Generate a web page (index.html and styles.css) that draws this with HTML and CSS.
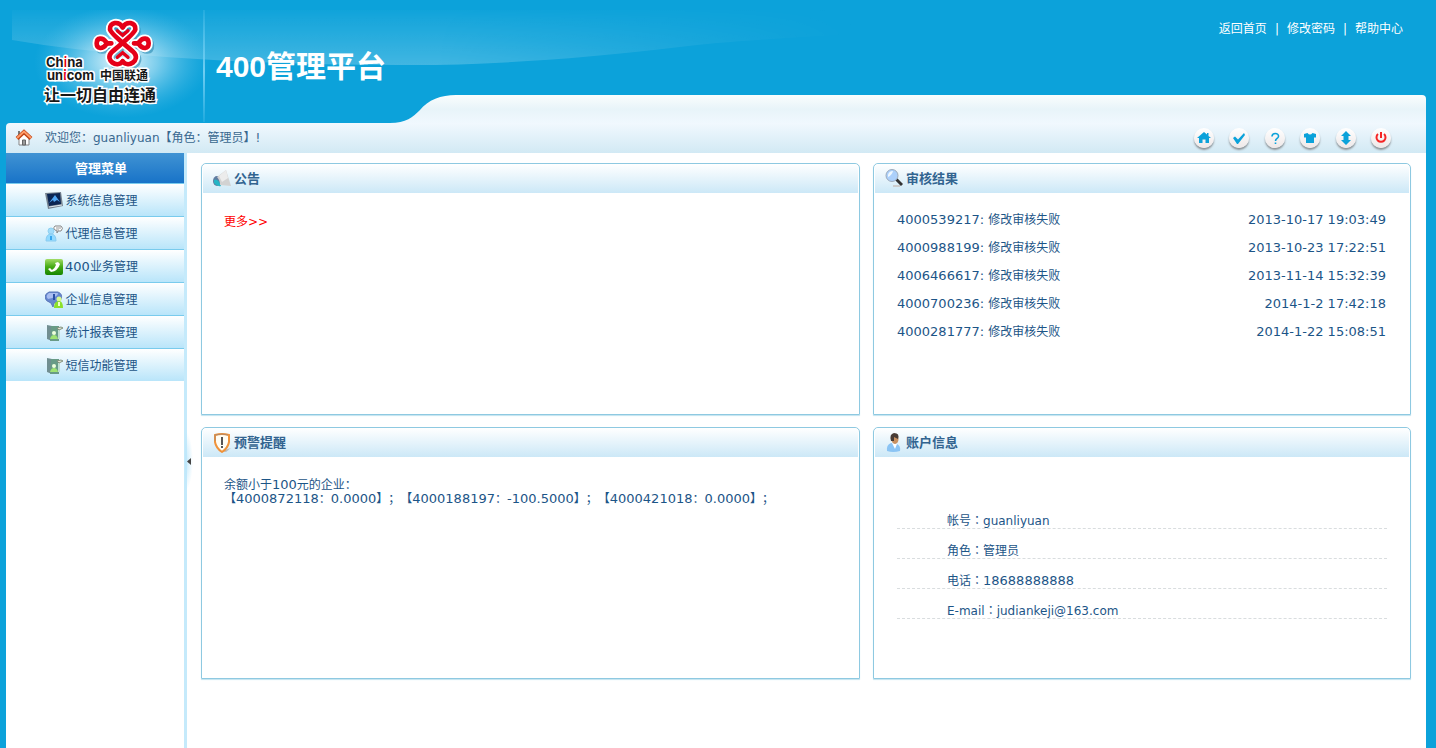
FILE: index.html
```html
<!DOCTYPE html>
<html lang="zh-CN">
<head>
<meta charset="utf-8">
<title>400管理平台</title>
<link rel="stylesheet" href="styles.css">
</head>
<body>
<header class="header">
  <svg class="shine" width="1100" height="113" viewBox="12 10 1100 113" aria-hidden="true">
    <defs>
      <linearGradient id="shineY" x1="0" y1="0" x2="0" y2="1"><stop offset="0" stop-color="#fff" stop-opacity=".02"/><stop offset="1" stop-color="#fff" stop-opacity=".22"/></linearGradient>
      <linearGradient id="shineX" x1="0" y1="0" x2="1" y2="0"><stop offset="0" stop-color="#fff"/><stop offset=".5" stop-color="#fff"/><stop offset="1" stop-color="#000"/></linearGradient>
      <mask id="shineMask"><rect x="12" y="0" width="850" height="123" fill="url(#shineX)"/></mask>
      <radialGradient id="glow"><stop offset="0" stop-color="#fff" stop-opacity=".95"/><stop offset=".4" stop-color="#c8ebf9" stop-opacity=".6"/><stop offset="1" stop-color="#58c0e8" stop-opacity="0"/></radialGradient>
      <linearGradient id="rule" x1="0" y1="0" x2="0" y2="1"><stop offset="0" stop-color="#6fcdf2" stop-opacity=".2"/><stop offset=".55" stop-color="#6fcdf2"/><stop offset="1" stop-color="#6fcdf2" stop-opacity=".2"/></linearGradient>
    </defs>
    <path d="M12 10H860V34Q740 40 680 47Q520 66 400 65Q260 65 140 55Q70 50 12 40Z" fill="url(#shineY)" mask="url(#shineMask)"/>
    <ellipse cx="122" cy="62" rx="88" ry="56" fill="url(#glow)"/>
    <rect x="203" y="10" width="2" height="112" fill="url(#rule)"/>
  </svg>
  <svg class="logo" width="180" height="113" viewBox="12 10 180 113" role="img" aria-label="China unicom 中国联通">
    <defs>
      <g id="knot" fill="none" stroke-linecap="round" stroke-linejoin="round">
        <path d="M368 82C356 62 328 66 330 88C331 102 386 142 402 158C422 180 385 206 368 184"/>
        <path d="M368 82C380 62 408 66 406 88C405 102 350 142 334 158C314 180 351 206 368 184"/>
        <path d="M290 130C290 112 308 112 318 126L322 130L318 134C308 148 290 148 290 130ZM446 130C446 112 428 112 418 126L414 130L418 134C428 148 446 148 446 130Z"/>
        <path d="M322 130H334M402 130H414"/>
      </g>
    </defs>
    <g transform="scale(.333333)">
      <use href="#knot" stroke="#1479a5" stroke-opacity=".5" stroke-width="21" x="6" y="7"/>
      <use href="#knot" stroke="#fff" stroke-width="25"/>
      <use href="#knot" stroke="#e50019" stroke-width="14"/>
      <path d="M352 92L368 106L384 92M352 172L368 158L384 172" fill="none" stroke="#e50019" stroke-width="10" stroke-linecap="round"/>
    </g>
    <g class="logo-text">
      <text x="46" y="67" font-size="13">Ch<tspan fill="#e50019">i</tspan>na</text>
      <text x="47" y="80" font-size="13">un<tspan fill="#e50019">i</tspan>com</text>
      <text x="100" y="80" font-size="12">中国联通</text>
      <text class="slogan" x="44" y="101" font-size="16">让一切自由连通</text>
    </g>
  </svg>
  <h1 class="title">400管理平台</h1>
  <nav class="top-links" aria-label="快捷链接"><a href="#">返回首页</a><span>|</span><a href="#">修改密码</a><span>|</span><a href="#">帮助中心</a></nav>
  <div class="tab">
    <svg width="66" height="28" viewBox="0 0 66 28" aria-hidden="true"><defs><linearGradient id="tabFill" x1="0" y1="0" x2="0" y2="1"><stop offset="0" stop-color="#fafdfd"/><stop offset=".5" stop-color="#e8f4f9"/><stop offset="1" stop-color="#f0f8fe"/></linearGradient></defs><path d="M0 28C16 28 23 22 30 15C38 5 51 0 66 0V28Z" fill="url(#tabFill)"/></svg>
    <div class="tab-fill"></div>
  </div>
</header>

<div class="welcome">
  <svg width="18" height="18" viewBox="0 0 18 18" aria-hidden="true"><path d="M4 8V16H14V8L9 4Z" fill="#fff" stroke="#858585"/><path d="M3 2H5V6H3Z" fill="#777"/><path d="M7.500 16V11H10.500V16Z" fill="#9a9a9a" stroke="#666"/><path d="M2 9.500L9 3L16 9.500" fill="none" stroke="#c04316" stroke-width="4"/><path d="M2 9L9 2.500L16 9" fill="none" stroke="#ff9b68" stroke-width="2"/></svg>
  <p>欢迎您：guanliyuan【角色：管理员】!</p>
  <div class="actions">
    <button aria-label="首页"><svg viewBox="0 0 20 20"><path d="M10 4L3 10H5V15H8.500V11.500H11.500V15H15V10H17L14.500 8V5H13V6.500Z"/></svg></button>
    <button aria-label="确认"><svg viewBox="0 0 20 20"><path d="M4 10L6 8.500L9 11.500L15 5L16 7L9 16H8Z"/></svg></button>
    <button aria-label="帮助"><svg viewBox="0 0 20 20"><path d="M7 8.500C7 4.500 14 4.500 13.500 8.500C13.300 10.500 10.500 10.500 10.500 13M10.500 14.500V16" fill="none" stroke="#0ca2da" stroke-width="1.600"/></svg></button>
    <button aria-label="换肤"><svg viewBox="0 0 20 20"><path d="M7.500 5Q10 8 12.500 5L16 6V9.500H14V15H6V9.500H4V6Z"/></svg></button>
    <button aria-label="展开"><svg viewBox="0 0 20 20"><path d="M10 3L15 8H12.500V12H15L10 17L5 12H7.500V8H5Z"/></svg></button>
    <button aria-label="退出"><svg viewBox="0 0 20 20"><path d="M7 6A4.500 4.500 0 1 0 13 6M10 4V10" fill="none" stroke="#f52525" stroke-width="2"/></svg></button>
  </div>
</div>

<div class="layout">
  <aside class="sidebar">
    <h2>管理菜单</h2>
    <nav class="menu" aria-label="管理菜单">
      <a href="#"><svg viewBox="0 0 18 18"><path d="M0 1L16 0L18 14L3 17Z" fill="#74818e"/><path d="M2 2L15 1L16 12L4 14Z" fill="#0b2553"/><path d="M4 11L10 3L15 10L12 8L9 10L8 8Z" fill="#50a7f5"/><path d="M4 15L17 13" stroke="#dfe8f0" stroke-width="1"/></svg>系统信息管理</a>
      <a href="#"><svg viewBox="0 0 18 18"><circle cx="6" cy="6" r="3" fill="#a1dcfa" stroke="#8fd0f0"/><path d="M1 16Q1 9 6 9Q11 9 11 16Z" fill="#91daff" stroke="#8accf0"/><path d="M5 11H7V15H5Z" fill="#36a6ed"/><path d="M10 1H16Q19 3 16 6H13L12 8V6Q7 4 10 1Z" fill="#fff" stroke="#858585"/><path d="M11 3H16M11 5H14" stroke="#999"/></svg>代理信息管理</a>
      <a href="#"><svg viewBox="0 0 18 18"><defs><linearGradient id="green" x2="0" y2="1"><stop stop-color="#a3dc67"/><stop offset=".5" stop-color="#42a914"/><stop offset="1" stop-color="#188500"/></linearGradient></defs><rect y="1" width="18" height="16" rx="2" fill="url(#green)"/><path d="M3 11L5 10L7 12Q10 10 11 7L10 5L13 4L15 6Q13 13 6 14Z" fill="#fff"/></svg><span><span class="num">400</span>业务管理</span></a>
      <a href="#"><svg viewBox="0 0 18 18"><path d="M4 1H13Q18 3 16 8Q15 12 9 12L8 16L6 12Q0 10 0 6Q0 3 4 1Z" fill="#6688d0" stroke="#5b78b8"/><path d="M4 2H13Q13 6 3 8Q0 5 4 2Z" fill="#a8bdf0"/><path d="M9 3V9" stroke="#294fa3" stroke-width="2"/><circle cx="14" cy="8" r="2.500" fill="#d7f98e"/><path d="M9 17Q9 10 14 10Q18 10 18 17Z" fill="#8de12c"/><path d="M14 11V15" stroke="#efffc5" stroke-width="2"/></svg>企业信息管理</a>
      <a href="#"><svg viewBox="0 0 18 18"><path d="M2 1L7 2V17L2 15Z" fill="#718e91"/><path d="M6 2H14V17H5Z" fill="#689b86"/><path d="M14 4V15" stroke="#beddd0" stroke-width="2"/><circle cx="9" cy="9" r="2" fill="#edffdc"/><path d="M5 15Q6 11 9 11Q12 11 13 15Z" fill="#9ee272"/><path d="M12 4L16 3L18 4L14 6Z" fill="#e3e9d5" stroke="#84917e"/></svg>统计报表管理</a>
      <a href="#"><svg viewBox="0 0 18 18"><path d="M2 1L7 2V17L2 15Z" fill="#718e91"/><path d="M6 2H14V17H5Z" fill="#689b86"/><path d="M14 4V15" stroke="#beddd0" stroke-width="2"/><circle cx="9" cy="9" r="2" fill="#edffdc"/><path d="M5 15Q6 11 9 11Q12 11 13 15Z" fill="#9ee272"/><path d="M12 4L16 3L18 4L14 6Z" fill="#e3e9d5" stroke="#84917e"/></svg>短信功能管理</a>
    </nav>
  </aside>
  <button class="collapse" aria-label="收起菜单"><svg width="4" height="7" viewBox="0 0 4 7"><path d="M0 3.500L4 0V7Z" fill="#444"/></svg></button>

  <main class="panels">
    <section class="panel">
      <h2><svg viewBox="0 0 20 20"><ellipse cx="6" cy="12" rx="4" ry="5" fill="#607ca1"/><path d="M3 11Q7 9 10 17Q6 18 3 14Z" fill="#25b5c5"/><path d="M6 8L15 1L20 17L9 16Q9 11 6 8Z" fill="#d2d2d2"/><path d="M8 7L15 1L17 9L11 13Z" fill="#ececec"/></svg>公告</h2>
      <p class="more"><a href="#">更多<span>&gt;&gt;</span></a></p>
    </section>
    <section class="panel">
      <h2><svg viewBox="0 0 20 20"><path d="M10 17H17" stroke="#ccc" stroke-width="2"/><path d="M13 10L19 16" stroke="#333" stroke-width="3"/><circle cx="9" cy="6.500" r="6" fill="#acd0fb" stroke="#9daaba"/><path d="M5 6Q6 2 10 2Q9 6 5 8Z" fill="#eff8ff"/></svg>审核结果</h2>
      <ul class="results">
        <li><span><span class="num">4000539217: </span>修改审核失败</span><time class="num">2013-10-17 19:03:49</time></li>
        <li><span><span class="num">4000988199: </span>修改审核失败</span><time class="num">2013-10-23 17:22:51</time></li>
        <li><span><span class="num">4006466617: </span>修改审核失败</span><time class="num">2013-11-14 15:32:39</time></li>
        <li><span><span class="num">4000700236: </span>修改审核失败</span><time class="num">2014-1-2 17:42:18</time></li>
        <li><span><span class="num">4000281777: </span>修改审核失败</span><time class="num">2014-1-22 15:08:51</time></li>
      </ul>
    </section>
    <section class="panel">
      <h2><svg viewBox="0 0 20 20"><path d="M10 18L20 15L15 19Z" fill="#bbb"/><path d="M4 2Q11 0 18 2V9Q17 15 11 19Q5 15 4 9Z" fill="#fffdf4" stroke="#f0933a" stroke-width="2"/><path d="M4 2Q11 0 17 2M4 2V8" fill="none" stroke="#b58a68"/><path d="M11 4V12M11 13V15" stroke="#555" stroke-width="2"/></svg>预警提醒</h2>
      <p class="warning">余额小于<span class="num">100</span>元的企业：<br>【<span class="num">4000872118</span>：<span class="num">0.0000</span>】；【<span class="num">4000188197</span>：<span class="num">-100.5000</span>】；【<span class="num">4000421018</span>：<span class="num">0.0000</span>】；</p>
    </section>
    <section class="panel">
      <h2><svg viewBox="0 0 20 20"><path d="M4 18Q3 12 8 10L14 11Q18 13 17 18Q10 20 4 18Z" fill="#8bc4f4"/><path d="M9 10L12 16L14 11Z" fill="#fff"/><ellipse cx="12" cy="6" rx="3.500" ry="5" fill="#c99161"/><path d="M8 8Q6 1 11 0Q17 0 15 6L11 4V8Z" fill="#493c35"/></svg>账户信息</h2>
      <dl class="account">
        <div><dt>帐号<span class="colon" lang="zh-TW">：</span></dt><dd>guanliyuan</dd></div>
        <div><dt>角色<span class="colon" lang="zh-TW">：</span></dt><dd>管理员</dd></div>
        <div><dt>电话<span class="colon" lang="zh-TW">：</span></dt><dd class="num">18688888888</dd></div>
        <div><dt>E-mail<span class="colon" lang="zh-TW">：</span></dt><dd>judiankeji@163.com</dd></div>
      </dl>
    </section>
  </main>
</div>
</body>
</html>
```

FILE: styles.css
```css
* { box-sizing: border-box; }
body {
  display: flex;
  flex-direction: column;
  min-height: 100vh;
  margin: 0;
  padding: 0 10px 0 6px;
  background: #0ca2da;
  color: #1c5587;
  font: 12px/16px "DejaVu Sans", "Noto Sans CJK SC", sans-serif;
  text-spacing-trim: space-all;
}
h1, h2, p, ul, dl, dd { margin: 0; }
a { color: inherit; text-decoration: none; }
button { border: 0; padding: 0; cursor: pointer; }
.num { font-size: 13px; line-height: 1; }

.header {
  position: relative;
  display: grid;
  grid-template-columns: 204px 1fr auto;
  grid-template-rows: 95px 28px;
}
.shine { position: absolute; left: 6px; top: 10px; max-width: 100%; }
.logo { position: relative; grid-area: 1 / 1 / 3 / 2; margin: 10px 0 0 6px; }
.logo-text {
  fill: #171717;
  stroke: #fff;
  stroke-width: 3px;
  paint-order: stroke;
  font-family: Inter, "Noto Sans CJK SC", sans-serif;
  font-weight: 700;
}
.title {
  position: relative;
  padding: 47px 0 0 6px;
  color: #fff;
  font: 700 30px/40px "Liberation Sans", "Noto Sans CJK SC", sans-serif;
}
.top-links {
  position: relative;
  display: flex;
  gap: 8px;
  height: 16px;
  margin: 21px 23px 0 0;
  color: #fff;
}
.tab { display: flex; grid-area: 2 / 1 / 3 / 4; margin-left: 384px; }
.tab-fill {
  flex: 1;
  border-radius: 0 4px 0 0;
  background: linear-gradient(#fafdfd, #e8f4f9 50%, #f0f8fe);
}

.welcome {
  display: flex;
  align-items: center;
  gap: 12px;
  height: 30px;
  padding: 0 35px 0 9px;
  border-radius: 4px 0 0 0;
  background: linear-gradient(#f1f8fe, #d2e9f4);
  color: #39688f;
}
.actions { display: flex; justify-content: space-between; width: 197px; margin-left: auto; }
.actions button {
  width: 20px;
  height: 20px;
  border-radius: 50%;
  background: linear-gradient(#fff, #eee8e8);
  box-shadow: 0 2px 2px #8c9296;
}
.actions svg { display: block; width: 20px; height: 20px; fill: #0ca2da; }

.layout { position: relative; display: flex; flex: 1; background: #fff; }
.sidebar { width: 181px; border-right: 3px solid #c5eafb; flex: none; }
.sidebar h2 {
  height: 30px;
  padding-left: 12px;
  background: linear-gradient(#4093d3, #1873c8);
  color: #fff;
  font-size: 13px;
  line-height: 32px;
  text-align: center;
}
.menu a {
  display: flex;
  align-items: center;
  justify-content: center;
  gap: 2px;
  height: 33px;
  padding: 1px 7px 0 0;
  border-top: 1px solid #79cbed;
  background: linear-gradient(#fff, #b9e5fa);
}
.menu svg { width: 18px; height: 18px; }
.collapse {
  position: absolute;
  left: 179px;
  top: 278px;
  display: grid;
  place-items: center;
  width: 8px;
  height: 60px;
  background: radial-gradient(ellipse at 0 50%, #bde7fb, transparent 70%);
}

.panels {
  display: grid;
  flex: 1;
  grid-template-columns: minmax(0, 659fr) minmax(0, 538fr);
  grid-auto-rows: 252px;
  gap: 12px 13px;
  align-content: start;
  padding: 10px 15px 16px 14px;
}
.panel {
  border: 1px solid #8ec9e1;
  border-radius: 5px 5px 0 0;
  box-shadow: 0 1px 1px #c3e4f0;
}
.panel h2 {
  display: flex;
  align-items: center;
  gap: 3px;
  height: 29px;
  margin: 0 1px;
  padding-left: 8px;
  border-radius: 4px 4px 0 0;
  background: linear-gradient(#fff, #cce8f7);
  color: #326490;
  font-size: 13px;
}
.panel h2 svg { width: 20px; height: 20px; }
.more { padding: 21px 22px; color: red; }
.results { padding: 14px 24px 0 23px; list-style: none; }
.results li { display: flex; justify-content: space-between; align-items: baseline; height: 28px; padding-top: 5px; }
.warning { padding: 21px 22px; line-height: 14px; }
.account { padding: 42px 23px 0; }
.account div {
  display: flex;
  align-items: flex-end;
  height: 30px;
  padding-left: 50px;
  border-bottom: 1px dashed #d9dddf;
  line-height: 14px;
}
.colon { font-family: "Noto Sans CJK TC", sans-serif; }
.account .num { line-height: 14px; }
```
